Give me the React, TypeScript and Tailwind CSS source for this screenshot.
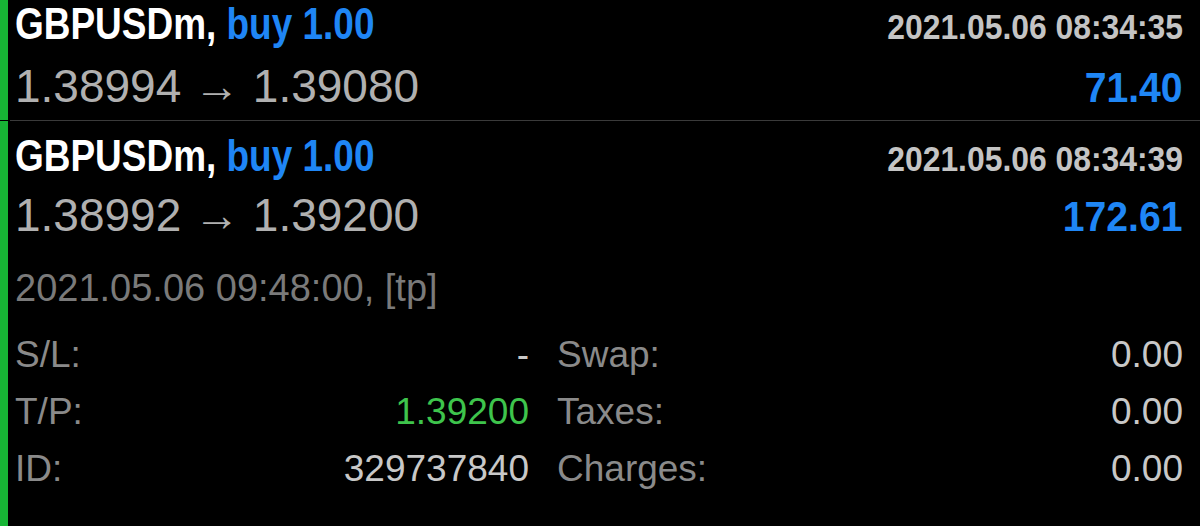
import React from "react";

const sans = { fontFamily: '"Liberation Sans", Arial, sans-serif' };

type Deal = {
  symbol: string;
  side: string;
  time: string;
  open: string;
  close: string;
  profit: string;
};

function DealHeader({ deal, gap }: { deal: Deal; gap: string }) {
  return (
    <div style={sans}>
      <div className="flex items-baseline justify-between h-[48px] leading-[48px]">
        <span className="inline-block origin-left scale-x-[0.84] whitespace-nowrap text-[44px] font-bold text-white">
          {deal.symbol}, <span className="text-[#1f86f5]">{deal.side}</span>
        </span>
        <span className="inline-block origin-right scale-x-[0.91] whitespace-nowrap text-[35px] font-bold text-[#c4c4c4]">
          {deal.time}
        </span>
      </div>
      <div className={"flex items-baseline justify-between h-[56px] leading-[56px] " + gap}>
        <span className="whitespace-nowrap text-[46px] text-[#b0b0b0]">
          {deal.open} → {deal.close}
        </span>
        <span className="inline-block origin-right scale-x-[0.91] text-[43px] font-bold text-[#1f86f5]">
          {deal.profit}
        </span>
      </div>
    </div>
  );
}

function Detail({ label, value, valueClass }: { label: string; value: string; valueClass?: string }) {
  return (
    <div className="flex items-baseline justify-between h-[57px] leading-[57px]">
      <span className="text-[#8a8a8a]">{label}</span>
      <span className={valueClass ?? "text-[#c8c8c8]"}>{value}</span>
    </div>
  );
}

export default function App() {
  const first: Deal = {
    symbol: "GBPUSDm",
    side: "buy 1.00",
    time: "2021.05.06 08:34:35",
    open: "1.38994",
    close: "1.39080",
    profit: "71.40",
  };
  const second: Deal = {
    symbol: "GBPUSDm",
    side: "buy 1.00",
    time: "2021.05.06 08:34:39",
    open: "1.38992",
    close: "1.39200",
    profit: "172.61",
  };

  return (
    <div className="w-[1200px] h-[526px] bg-black overflow-hidden flex flex-col">
      <div className="flex h-[120px]">
        <div className="w-[8px] bg-[#17b535]" />
        <div className="flex-1 pl-[7px] pr-[17px]">
          <DealHeader deal={first} gap="mt-[10px]" />
        </div>
      </div>
      <div className="h-px ml-[10px] bg-[#3a3a3a]" />
      <div className="flex flex-1">
        <div className="w-[8px] bg-[#17b535]" />
        <div className="flex-1 pl-[7px] pr-[17px] pt-[11px]">
          <DealHeader deal={second} gap="mt-[7px]" />
          <div className="mt-[21px] h-[48px] leading-[48px] text-[38px] text-[#7a7a7a]" style={sans}>
            2021.05.06 09:48:00, [tp]
          </div>
          <div className="flex mt-[14px] text-[37px]" style={sans}>
            <div className="w-[514px]">
              <Detail label="S/L:" value="-" />
              <Detail label="T/P:" value="1.39200" valueClass="text-[#3ec44c]" />
              <Detail label="ID:" value="329737840" />
            </div>
            <div className="flex-1 ml-[28px]">
              <Detail label="Swap:" value="0.00" />
              <Detail label="Taxes:" value="0.00" />
              <Detail label="Charges:" value="0.00" />
            </div>
          </div>
        </div>
      </div>
    </div>
  );
}
